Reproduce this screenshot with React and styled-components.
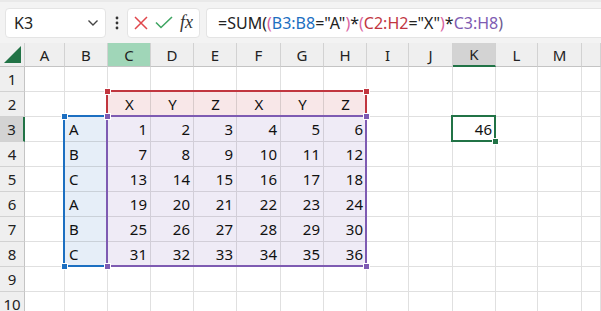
import React from "react";
import styled, { createGlobalStyle } from "styled-components";

const Global = createGlobalStyle`
  html, body { margin: 0; padding: 0; background: #fff; }
  body { font-family: "Noto Sans", "Noto Sans CJK JP", sans-serif; }
`;

const Page = styled.div`
  width: 601px;
  height: 311px;
  overflow: hidden;
  display: flex;
  flex-direction: column;
  background: #fff;
`;

const Bar = styled.div`
  height: 43px;
  flex: none;
  box-sizing: border-box;
  background: #f3f3f3;
  border-top: 2px solid #e9e9e9;
  display: flex;
  align-items: center;
  padding: 0 0 0 5px;
  gap: 0;
`;

const Box = styled.div`
  height: 30px;
  box-sizing: border-box;
  background: #fff;
  border: 1px solid #e4e4e4;
  border-radius: 4px;
  display: flex;
  align-items: center;
`;

const NameBox = styled(Box)`
  width: 101px;
  padding: 0 6px 0 8px;
  justify-content: space-between;
  font-size: 16px;
  color: #222;
`;

const Dots = styled.div`
  width: 21px;
  display: flex;
  justify-content: center;
`;

const IconBox = styled(Box)`
  width: 73px;
  margin-right: 6px;
  padding: 0 4px 0 6px;
  justify-content: space-between;
`;

const Fx = styled.span`
  font-family: "Liberation Serif", "DejaVu Serif", serif;
  font-style: italic;
  font-size: 18px;
  color: #333;
  padding-right: 2px;
`;

const FormulaBox = styled(Box)`
  flex: 1;
  border-radius: 4px 0 0 4px;
  border-right: none;
  padding-left: 11px;
  font-size: 16px;
  color: #222;
  white-space: pre;
`;

const Tok = styled.span`
  color: ${(p) => p.$c || "#222"};
`;

const Sheet = styled.div`
  position: relative;
  flex: 1;
  display: grid;
  grid-template-columns: 25px 40px 43px 43px 43px 43px 44px 43px 43px 42px 44px 43px 42px 44px 1fr;
  grid-template-rows: 24px repeat(10, 25px);
  font-size: 15px;
  color: #111;
`;

const Corner = styled.div`
  box-sizing: border-box;
  background: #efefef;
  border-right: 1px solid #cfcfcf;
  border-bottom: 1px solid #c4c4c4;
  position: relative;
  display: flex;
  align-items: flex-end;
  justify-content: flex-end;
  padding: 0 3px 3px 0;
`;

const ColHead = styled.div`
  box-sizing: border-box;
  background: ${(p) => (p.$green ? "#a0d6b8" : p.$active ? "#d3d3d3" : "#efefef")};
  border-right: 1px solid #d2d2d2;
  border-bottom: ${(p) => (p.$active ? "2px solid #217346" : "1px solid #c4c4c4")};
  display: flex;
  align-items: center;
  justify-content: center;
  color: #222;
  font-size: 15px;
`;

const RowHead = styled.div`
  box-sizing: border-box;
  background: ${(p) => (p.$active ? "#d3d3d3" : "#efefef")};
  border-bottom: 1px solid #d2d2d2;
  border-right: ${(p) => (p.$active ? "2px solid #217346" : "1px solid #c4c4c4")};
  display: flex;
  align-items: center;
  justify-content: center;
  color: #222;
  font-size: 15px;
`;

const Cell = styled.div`
  box-sizing: border-box;
  background: ${(p) => p.$fill || "#fff"};
  border-right: 1px solid rgba(0, 0, 0, 0.12);
  border-bottom: 1px solid rgba(0, 0, 0, 0.12);
  display: flex;
  align-items: center;
  justify-content: ${(p) =>
    p.$align === "right" ? "flex-end" : p.$align === "center" ? "center" : "flex-start"};
  padding: 0 3px 0 4px;
  white-space: nowrap;
  overflow: hidden;
`;

const Range = styled.div`
  position: absolute;
  box-sizing: border-box;
  left: ${(p) => p.$x}px;
  top: ${(p) => p.$y}px;
  width: ${(p) => p.$w}px;
  height: ${(p) => p.$h}px;
  border: 2px solid ${(p) => p.$c};
  ${(p) => (p.$noBottom ? "border-bottom: none;" : "")}
  pointer-events: none;
`;

const Handle = styled.div`
  position: absolute;
  box-sizing: border-box;
  width: 7px;
  height: 7px;
  left: ${(p) => p.$x - 3}px;
  top: ${(p) => p.$y - 3}px;
  background: ${(p) => p.$c};
  border: 1px solid #fff;
`;

const colW = [40, 43, 43, 43, 43, 44, 43, 43, 42, 44, 43, 42, 44];
const letters = ["A", "B", "C", "D", "E", "F", "G", "H", "I", "J", "K", "L", "M", ""];
const colX = [25];
colW.forEach((w, i) => colX.push(colX[i] + w));
colX.push(601);
// colX[i] is left edge of column i (A=0)
const rowY = (r) => 24 + (r - 1) * 25; // top of row r within sheet

const BLUE = "#1c6fc1";
const RED = "#c1363f";
const PURPLE = "#7e5bb2";
const GREEN = "#217346";
const FBLUE = "#e6eef8";
const FRED = "#f8e7e8";
const FPURPLE = "#efebf6";

const letterCol = ["A", "B", "C", "A", "B", "C"];
const hdr = ["X", "Y", "Z", "X", "Y", "Z"];

function cellContent(r, c) {
  // c index: 0=A
  if (r === 2 && c >= 2 && c <= 7) return { text: hdr[c - 2], align: "center", fill: FRED };
  if (r >= 3 && r <= 8 && c === 1) return { text: letterCol[r - 3], align: "left", fill: FBLUE };
  if (r >= 3 && r <= 8 && c >= 2 && c <= 7)
    return { text: String((r - 3) * 6 + (c - 1)), align: "right", fill: FPURPLE };
  if (r === 3 && c === 10) return { text: "46", align: "right" };
  return { text: "" };
}

function rangeBox(c0, r0, c1, r1) {
  const x0 = colX[c0];
  const x1 = colX[c1 + 1];
  const y0 = rowY(r0);
  const y1 = rowY(r1 + 1);
  return { $x: x0 - 2, $y: y0 - 2, $w: x1 - x0 + 2, $h: y1 - y0 + 2 };
}

const Chevron = () => (
  <svg width="12" height="8" viewBox="0 0 12 8">
    <path d="M1.5 1.5 L6 6 L10.5 1.5" fill="none" stroke="#444" strokeWidth="1.4" />
  </svg>
);

const VDots = () => (
  <svg width="4" height="14" viewBox="0 0 4 14">
    <circle cx="2" cy="2" r="1.4" fill="#333" />
    <circle cx="2" cy="7" r="1.4" fill="#333" />
    <circle cx="2" cy="12" r="1.4" fill="#333" />
  </svg>
);

const Cross = () => (
  <svg width="14" height="14" viewBox="0 0 14 14">
    <path d="M1 1 L13 13 M13 1 L1 13" stroke="#e0474c" strokeWidth="1.5" fill="none" />
  </svg>
);

const Check = () => (
  <svg width="18" height="13" viewBox="0 0 18 13">
    <path d="M1 6.5 L6 11.5 L17 1" stroke="#3fa562" strokeWidth="1.6" fill="none" />
  </svg>
);

const CornerTri = () => (
  <svg width="17" height="17" viewBox="0 0 17 17">
    <path d="M17 0 L17 17 L0 17 Z" fill="#217346" />
  </svg>
);

export default function App() {
  const rows = [];
  for (let r = 1; r <= 10; r++) {
    rows.push(
      <RowHead key={"rh" + r} $active={r === 3}>
        {r}
      </RowHead>
    );
    for (let c = 0; c < 14; c++) {
      const v = cellContent(r, c);
      rows.push(
        <Cell key={r + "-" + c} $fill={v.fill} $align={v.align}>
          {v.text}
        </Cell>
      );
    }
  }

  const blue = rangeBox(1, 3, 1, 8);
  const red = rangeBox(2, 2, 7, 2);
  const purple = rangeBox(2, 3, 7, 8);
  const sel = rangeBox(10, 3, 10, 3);

  return (
    <Page>
      <Global />
      <Bar>
        <NameBox>
          <span>K3</span>
          <Chevron />
        </NameBox>
        <Dots>
          <VDots />
        </Dots>
        <IconBox>
          <Cross />
          <Check />
          <Fx>fx</Fx>
        </IconBox>
        <FormulaBox>
          <Tok>=SUM(</Tok>
          <Tok $c="#d9649f">(</Tok>
          <Tok $c={BLUE}>B3:B8</Tok>
          <Tok>="A"</Tok>
          <Tok $c="#d9649f">)</Tok>
          <Tok>*</Tok>
          <Tok $c="#d9649f">(</Tok>
          <Tok $c={RED}>C2:H2</Tok>
          <Tok>="X"</Tok>
          <Tok $c="#d9649f">)</Tok>
          <Tok>*</Tok>
          <Tok $c={PURPLE}>C3:H8</Tok>
          <Tok $c="#6c5a90">)</Tok>
        </FormulaBox>
      </Bar>
      <Sheet>
        <Corner>
          <CornerTri />
        </Corner>
        {letters.map((l, i) => (
          <ColHead key={"ch" + i} $green={l === "C"} $active={l === "K"}>
            {l}
          </ColHead>
        ))}
        {rows}

        <Range $c={BLUE} {...blue} />
        <Range $c={RED} {...red} $noBottom />
        <Range $c={PURPLE} {...purple} />
        <Range $c={GREEN} {...sel} />

        <Handle $c={BLUE} $x={colX[1] - 1} $y={rowY(3) - 1} />
        <Handle $c={BLUE} $x={colX[1] - 1} $y={rowY(9) - 1} />
        <Handle $c={RED} $x={colX[2] - 1} $y={rowY(2) - 1} />
        <Handle $c={RED} $x={colX[8] - 1} $y={rowY(2) - 1} />
        <Handle $c={PURPLE} $x={colX[2] - 1} $y={rowY(3) - 1} />
        <Handle $c={PURPLE} $x={colX[8] - 1} $y={rowY(3) - 1} />
        <Handle $c={PURPLE} $x={colX[2] - 1} $y={rowY(9) - 1} />
        <Handle $c={PURPLE} $x={colX[8] - 1} $y={rowY(9) - 1} />
        <Handle $c={GREEN} $x={colX[11] - 1} $y={rowY(4) - 1} />
      </Sheet>
    </Page>
  );
}
